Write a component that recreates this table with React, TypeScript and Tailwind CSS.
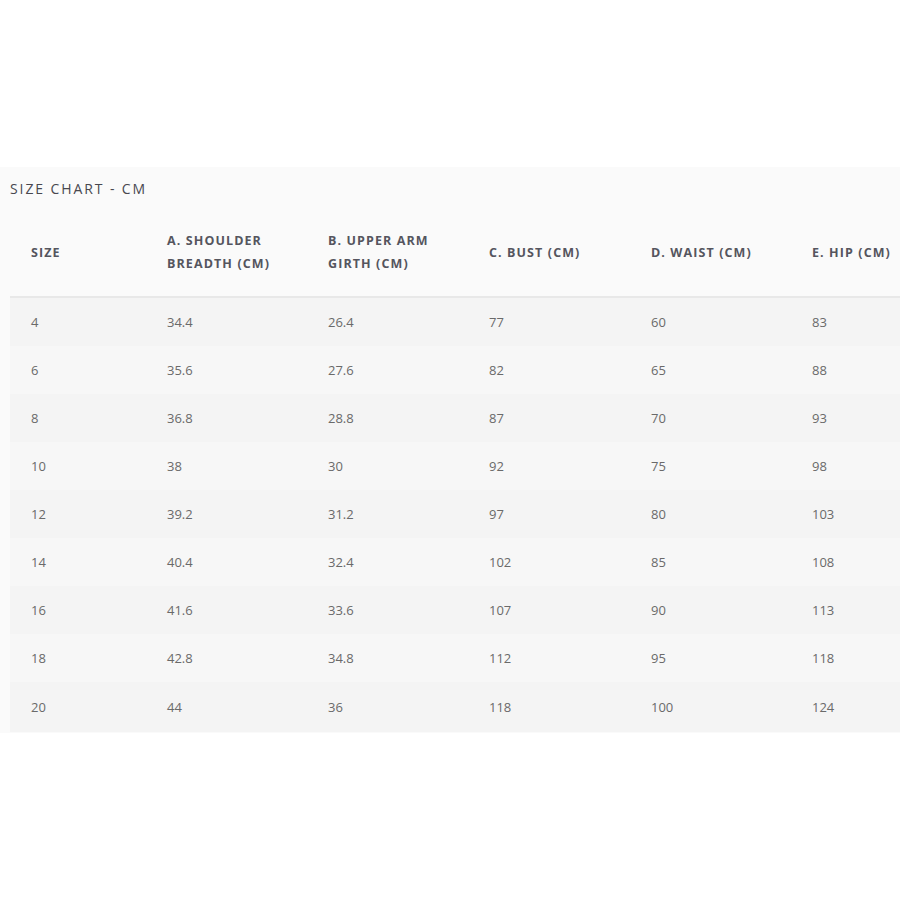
import React from 'react';

const headers = [
  ['SIZE'],
  ['A. SHOULDER', 'BREADTH (CM)'],
  ['B. UPPER ARM', 'GIRTH (CM)'],
  ['C. BUST (CM)'],
  ['D. WAIST (CM)'],
  ['E. HIP (CM)'],
];

const rows = [
  ['4', '34.4', '26.4', '77', '60', '83'],
  ['6', '35.6', '27.6', '82', '65', '88'],
  ['8', '36.8', '28.8', '87', '70', '93'],
  ['10', '38', '30', '92', '75', '98'],
  ['12', '39.2', '31.2', '97', '80', '103'],
  ['14', '40.4', '32.4', '102', '85', '108'],
  ['16', '41.6', '33.6', '107', '90', '113'],
  ['18', '42.8', '34.8', '112', '95', '118'],
  ['20', '44', '36', '118', '100', '124'],
];

const widths = ['w-[136px]', 'w-[161px]', 'w-[161px]', 'w-[162px]', 'w-[161px]', 'w-[161px]'];

export default function App() {
  return (
    <div className="w-[900px] h-[900px] bg-white overflow-hidden font-['Open_Sans',sans-serif]">
      <div className="mt-[167px] h-[566px] bg-[#fafafa] pl-[10px] overflow-hidden">
        {/* title */}
        <div className="h-[43px] flex items-center text-[14px] tracking-[1.9px] text-[#48484f]">
          SIZE CHART - CM
        </div>
        <div className="w-[942px]">
          {/* header */}
          <div className="flex h-[88px] items-center pb-[2px] border-b-2 border-[#e8e8e8]">
            {headers.map((h, i) => (
              <div key={i} className={`${widths[i]} shrink-0 pl-[21px] text-[12.5px] font-bold tracking-[1.1px] leading-[23px] text-[#55555e]`}>
                {h.map((line) => (
                  <div key={line}>{line}</div>
                ))}
              </div>
            ))}
          </div>
          {/* body */}
          {rows.map((r, ri) => (
            <div key={ri} className={`flex h-[48px] pt-[1px] items-center ${ri % 2 === 0 ? 'bg-[#f4f4f4]' : 'bg-[#f7f7f7]'} ${ri === rows.length - 1 ? 'h-[50px]' : ''}`}>
              {r.map((v, ci) => (
                <div key={ci} className={`${widths[ci]} shrink-0 pl-[21px] text-[13px] text-[#6a6a6a]`}>
                  {v}
                </div>
              ))}
            </div>
          ))}
        </div>
      </div>
    </div>
  );
}
